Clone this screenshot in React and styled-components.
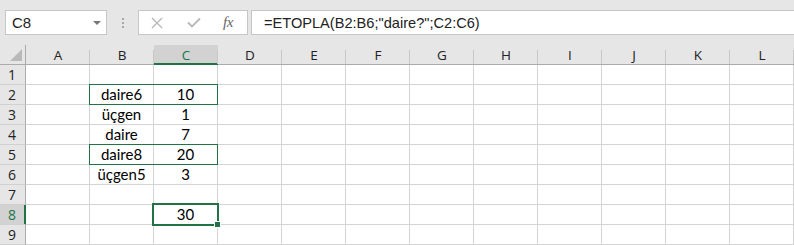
import React from "react";
import styled, { createGlobalStyle, css } from "styled-components";

const GREEN = "#217346";

const Global = createGlobalStyle`
  html, body { margin: 0; padding: 0; background: #ffffff; }
  body { width: 794px; height: 245px; overflow: hidden; }
`;

const Page = styled.div`
  width: 794px;
  height: 245px;
  overflow: hidden;
  background: #ffffff;
`;

const Toolbar = styled.div`
  height: 45px;
  box-sizing: border-box;
  background: #e6e6e6;
  display: flex;
  align-items: flex-start;
  padding: 10px 0 0 5px;
`;

const NameBox = styled.div`
  width: 102px;
  height: 25px;
  box-sizing: border-box;
  background: #ffffff;
  border: 1px solid #c6c6c6;
  display: flex;
  align-items: center;
  justify-content: space-between;
  padding: 0 5px 0 6px;
  font-family: "Liberation Sans", Arial, sans-serif;
  font-size: 15px;
  color: #222;
`;

const Caret = styled.span`
  width: 0;
  height: 0;
  border-left: 4px solid transparent;
  border-right: 4px solid transparent;
  border-top: 4px solid #777;
  margin-top: 1px;
`;

const Grip = styled.div`
  width: 31px;
  height: 25px;
  display: flex;
  flex-direction: column;
  align-items: center;
  justify-content: center;
  gap: 2px;
  & > span {
    width: 2px;
    height: 2px;
    background: #a8a8a8;
  }
`;

const FnBox = styled.div`
  width: 110px;
  height: 25px;
  box-sizing: border-box;
  background: #ffffff;
  border: 1px solid #c6c6c6;
  display: flex;
  align-items: center;
  padding-left: 12px;
`;

const FnSlot = styled.div`
  width: ${(p) => p.$w}px;
  height: 23px;
  display: flex;
  align-items: center;
  justify-content: flex-start;
`;

const Fx = styled.span`
  font-family: "Liberation Serif", "Times New Roman", serif;
  font-style: italic;
  font-size: 15px;
  color: #666;
  letter-spacing: -0.5px;
`;

const FormulaBox = styled.div`
  flex: 1;
  margin-left: 3px;
  height: 25px;
  box-sizing: border-box;
  background: #ffffff;
  border: 1px solid #c6c6c6;
  border-right: none;
  display: flex;
  align-items: center;
  padding-left: 12px;
  font-family: "Liberation Sans", Arial, sans-serif;
  font-size: 14.6px;
  color: #222;
  white-space: nowrap;
`;

const Sheet = styled.div`
  position: relative;
  display: grid;
  grid-template-columns: 26px repeat(12, 64px);
  grid-auto-rows: 20px;
`;

const Cell = styled.div`
  box-sizing: border-box;
  border-right: 1px solid #d4d4d4;
  border-bottom: 1px solid #d4d4d4;
  display: flex;
  align-items: flex-end;
  justify-content: center;
  padding-bottom: 1px;
  font-family: Lato, "Noto Sans", sans-serif;
  font-size: 15px;
  line-height: 18px;
  color: #000;
  background: #fff;
`;

const Corner = styled.div`
  position: relative;
  box-sizing: border-box;
  background: #e6e6e6;
  border-right: 1px solid #ababab;
  border-bottom: 1px solid #ababab;
  &::after {
    content: "";
    position: absolute;
    right: 3px;
    bottom: 3px;
    width: 0;
    height: 0;
    border-left: 12px solid transparent;
    border-bottom: 12px solid #b9b9b9;
  }
`;

const ColHead = styled.div`
  position: relative;
  box-sizing: border-box;
  background: ${(p) => (p.$active ? "#d2d2d2" : "#e6e6e6")};
  border-bottom: 1px solid ${(p) => (p.$active ? GREEN : "#ababab")};
  display: flex;
  align-items: center;
  justify-content: center;
  padding-top: 1px;
  font-family: "Open Sans", "Noto Sans", sans-serif;
  font-size: 13.5px;
  color: ${(p) => (p.$active ? GREEN : "#222")};
  ${(p) =>
    p.$active &&
    css`
      box-shadow: inset 0 -1px 0 ${GREEN};
    `}
  &::after {
    content: "";
    position: absolute;
    right: 0;
    top: 5px;
    bottom: 0;
    width: 1px;
    background: #c8c8c8;
  }
`;

const RowHead = styled.div`
  box-sizing: border-box;
  background: ${(p) => (p.$active ? "#d2d2d2" : "#e6e6e6")};
  border-right: 1px solid ${(p) => (p.$active ? GREEN : "#ababab")};
  border-bottom: 1px solid #d0d0d0;
  display: flex;
  align-items: center;
  justify-content: center;
  padding-right: 1px;
  font-family: "Open Sans", "Noto Sans", sans-serif;
  font-size: 14px;
  color: ${(p) => (p.$active ? GREEN : "#222")};
  ${(p) =>
    p.$active &&
    css`
      box-shadow: inset -1px 0 0 ${GREEN};
    `}
`;

const RangeOutline = styled.div`
  position: absolute;
  box-sizing: border-box;
  border: 1px solid ${GREEN};
  pointer-events: none;
`;

const Selection = styled.div`
  position: absolute;
  box-sizing: border-box;
  border: 2px solid ${GREEN};
  pointer-events: none;
`;

const FillHandle = styled.div`
  position: absolute;
  right: -4px;
  bottom: -4px;
  width: 7px;
  height: 7px;
  box-sizing: border-box;
  background: ${GREEN};
  border: 1px solid #fff;
`;

const COLS = ["A", "B", "C", "D", "E", "F", "G", "H", "I", "J", "K", "L"];
const DATA = {
  2: { B: "daire6", C: "10" },
  3: { B: "üçgen", C: "1" },
  4: { B: "daire", C: "7" },
  5: { B: "daire8", C: "20" },
  6: { B: "üçgen5", C: "3" },
  8: { C: "30" },
};
const ACTIVE_COL = "C";
const ACTIVE_ROW = 8;

function XIcon() {
  return (
    <svg width="12" height="12" viewBox="0 0 12 12">
      <path d="M1 1 L11 11 M11 1 L1 11" stroke="#b8b8b8" strokeWidth="1.4" fill="none" />
    </svg>
  );
}

function CheckIcon() {
  return (
    <svg width="14" height="11" viewBox="0 0 14 11">
      <path d="M1 5.5 L5 9.5 L13 1.5" stroke="#b8b8b8" strokeWidth="1.8" fill="none" />
    </svg>
  );
}

export default function App() {
  const rows = [1, 2, 3, 4, 5, 6, 7, 8, 9];
  return (
    <Page>
      <Global />
      <Toolbar>
        <NameBox>
          <span>C8</span>
          <Caret />
        </NameBox>
        <Grip>
          <span />
          <span />
          <span />
        </Grip>
        <FnBox>
          <FnSlot $w={36}>
            <XIcon />
          </FnSlot>
          <FnSlot $w={36}>
            <CheckIcon />
          </FnSlot>
          <FnSlot $w={24}>
            <Fx>fx</Fx>
          </FnSlot>
        </FnBox>
        <FormulaBox>=ETOPLA(B2:B6;"daire?";C2:C6)</FormulaBox>
      </Toolbar>
      <Sheet>
        <Corner />
        {COLS.map((c) => (
          <ColHead key={c} $active={c === ACTIVE_COL}>
            {c}
          </ColHead>
        ))}
        {rows.map((r) => (
          <React.Fragment key={r}>
            <RowHead $active={r === ACTIVE_ROW}>{r}</RowHead>
            {COLS.map((c) => (
              <Cell key={c}>{(DATA[r] && DATA[r][c]) || ""}</Cell>
            ))}
          </React.Fragment>
        ))}
        <RangeOutline style={{ left: 89, top: 39, width: 129, height: 21 }} />
        <RangeOutline style={{ left: 89, top: 99, width: 129, height: 21 }} />
        <Selection style={{ left: 152, top: 158, width: 67, height: 23 }}>
          <FillHandle />
        </Selection>
      </Sheet>
    </Page>
  );
}
